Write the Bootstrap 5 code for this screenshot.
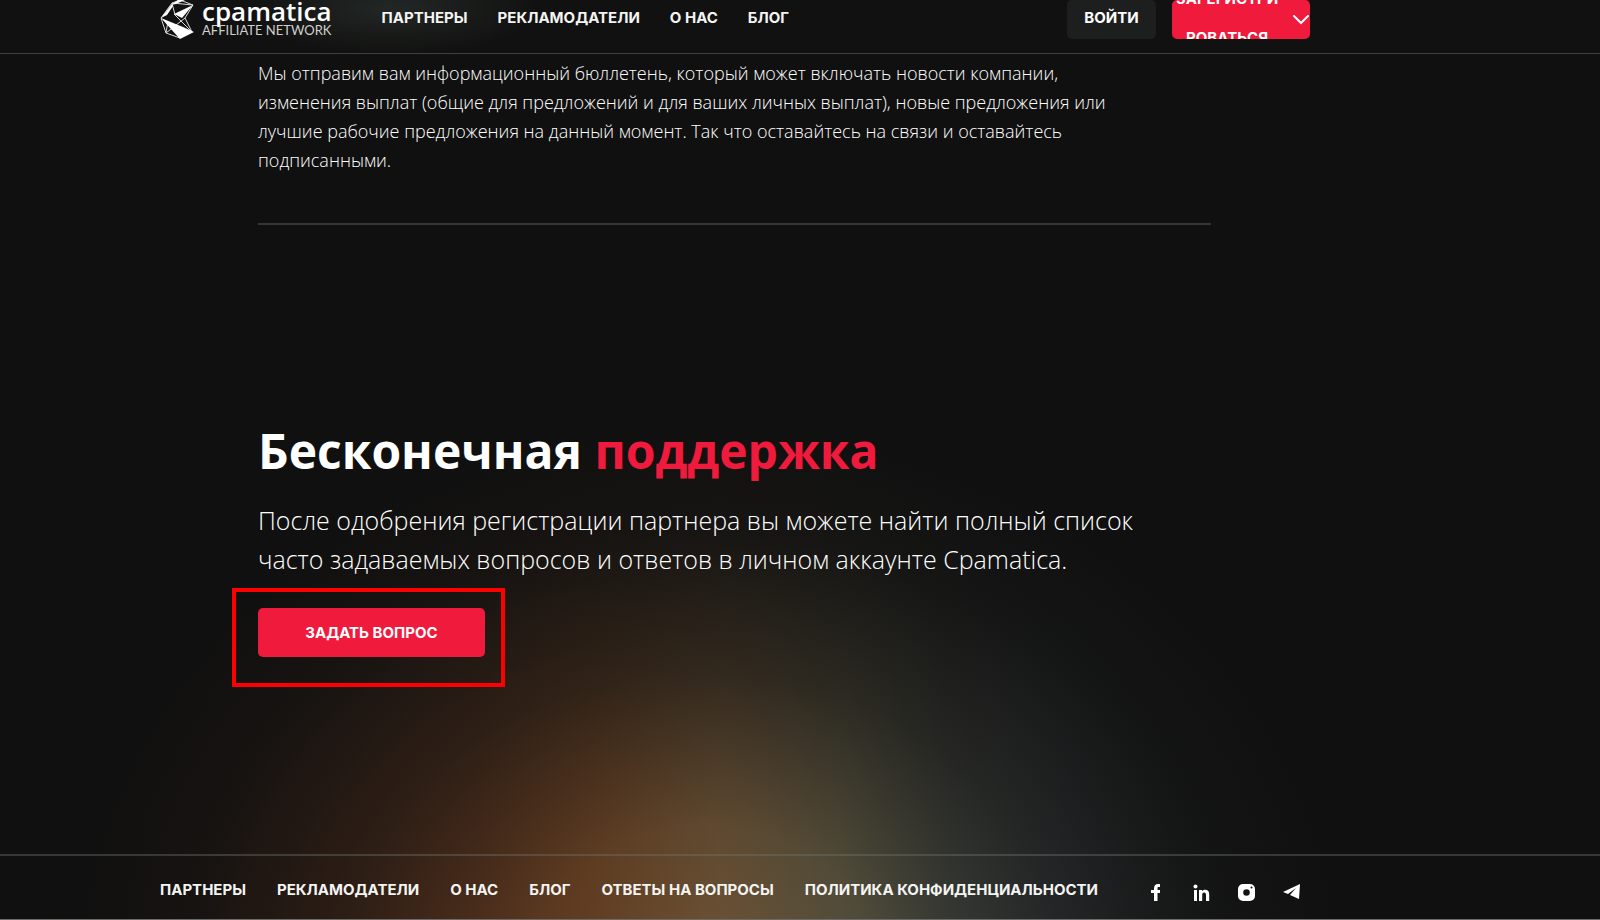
<!DOCTYPE html>
<html lang="ru">
<head>
<meta charset="utf-8">
<meta name="viewport" content="width=device-width, initial-scale=1">
<title>Cpamatica — поддержка</title>
<link href="https://cdn.jsdelivr.net/npm/bootstrap@5.3.0/dist/css/bootstrap.min.css" rel="stylesheet">
<style>
  :root { --accent: #f01a3c; --line: #323735; --ink: #101010; }
  body {
    font-family: "Open Sans", Lato, sans-serif;
    color: #ededeb;
    background:
      radial-gradient(ellipse 41% 60% at 44% 106%, rgba(16,16,16,0) 0%, rgba(16,16,16,.16) 27%, rgba(16,16,16,.64) 55%, rgba(16,16,16,.92) 80%, #101010 100%),
      linear-gradient(90deg, #5a2c18 0%, #643a20 30%, #6c4425 37%, #6e5436 45%, #5c5640 53%, #4b4e44 59%, #454c4e 66%, #3c4244 75%, #303030 100%);
    background-color: var(--ink);
  }
  a { color: #f4f4f2; text-decoration: none; }
  .page-inner { padding-left: 10%; padding-right: 18.125%; }
  .copy-inner { padding-left: 16.125%; padding-right: 24.3125%; }
  .site-header {
    padding-bottom: 14px;
    border-bottom: 1px solid #3c4240;
    background: radial-gradient(ellipse 150px 46px at 390px 8px, #222726, #181a18 60%, #111 100%) #111;
  }
  .caps-link { font: 700 15px/24px Inter, sans-serif; white-space: nowrap; }
  .link-row { gap: 30px; }
  .brand-name { font: 600 26px/22px "Open Sans", sans-serif; }
  .brand-tag { font: 400 13px/17px Lato, sans-serif; color: #cfcfcd; }
  .head-nav { padding-top: 6px; margin-left: 50px; }
  .head-btn { height: 39px; border-radius: 5px; border: 0; color: #fff; }
  .btn-login { width: 89px; background: #1d1f1e; }
  .btn-join { width: 138px; background: var(--accent); line-height: 39px; }
  .newsletter { font-size: 18px; line-height: 29px; font-weight: 300; color: #fff; padding-top: 5px; padding-bottom: 48px; border-bottom: 2px solid var(--line); }
  .support { padding-top: 192px; }
  .support h1 { font-size: 48px; line-height: 68px; font-weight: 700; color: #fff; }
  .support h1 span { color: var(--accent); }
  .support-text { font-size: 25px; line-height: 39px; font-weight: 300; color: #fff; margin-bottom: 9px; }
  .ask-frame { border: 4px solid #f00; margin-left: -26px; padding: 16px 16px 26px 22px; }
  .btn-ask { width: 227px; height: 49px; background: var(--accent); border: 0; border-radius: 5px; color: #fff; }
  .site-footer { border-top: 2px solid rgba(110,118,112,.4); border-bottom: 1px solid #6b6b69; height: 66px; padding-top: 5px; }
  .site-footer .link-row { gap: 31px; }
  .social { gap: 28px; margin-right: 10px; }
</style>
</head>
<body class="min-vh-100 d-flex flex-column">
<header class="site-header page-inner d-flex justify-content-between overflow-hidden">
  <div class="d-flex">
    <a href="#" class="d-flex gap-2 text-white" aria-label="cpamatica">
      <svg width="34" height="39" viewBox="0 0 34 39" fill="none" stroke="#d8d8d8" stroke-width="1">
        <path d="M1 18 12 3 20 0l13 5-8 13 7 14M1 18l5 15 14 5M12 3l3 12M14 14l18 18M6 33l19-15M8 21l-2 12M12 3l21 2"/>
        <path fill="#fff" stroke="none" d="M11 5 18 0h7l-9 4zM1 18 12 4l1 2-6 9zM14 14 33 5 22 18zM1 18l22 9 11 5-14 7z"/>
      </svg>
      <span class="d-flex flex-column">
        <span class="brand-name">cpamatica</span>
        <span class="brand-tag">AFFILIATE NETWORK</span>
      </span>
    </a>
    <nav class="d-flex link-row head-nav">
      <a class="caps-link" href="#">ПАРТНЕРЫ</a>
      <a class="caps-link" href="#">РЕКЛАМОДАТЕЛИ</a>
      <a class="caps-link" href="#">О НАС</a>
      <a class="caps-link" href="#">БЛОГ</a>
    </nav>
  </div>
  <div class="d-flex gap-3">
    <button type="button" class="head-btn btn-login caps-link p-0 pb-1">ВОЙТИ</button>
    <button type="button" class="head-btn btn-join caps-link p-0 overflow-hidden d-flex align-items-center justify-content-between">
      <span class="ms-1 pb-1">ЗАРЕГИСТРИ<br>РОВАТЬСЯ</span>
      <svg width="18" height="10" viewBox="0 0 18 10" fill="none" stroke="#fff" stroke-width="2" stroke-linecap="round"><path d="m2 1 7 7 7-7"/></svg>
    </button>
  </div>
</header>

<main class="copy-inner flex-grow-1">
  <section class="newsletter">Мы отправим вам информационный бюллетень, который может включать новости компании,<br>
    изменения выплат (общие для предложений и для ваших личных выплат), новые предложения или<br>
    лучшие рабочие предложения на данный момент. Так что оставайтесь на связи и оставайтесь<br>
    подписанными.</section>
  <section class="support">
    <h1 class="mb-3">Бесконечная <span>поддержка</span></h1>
    <p class="support-text">После одобрения регистрации партнера вы можете найти полный список<br>
      часто задаваемых вопросов и ответов в личном аккаунте Cpamatica.</p>
    <div class="ask-frame d-inline-block">
      <button type="button" class="btn-ask caps-link d-block">ЗАДАТЬ ВОПРОС</button>
    </div>
  </section>
</main>

<footer class="site-footer page-inner d-flex align-items-center justify-content-between">
  <nav class="d-flex link-row">
    <a class="caps-link" href="#">ПАРТНЕРЫ</a>
    <a class="caps-link" href="#">РЕКЛАМОДАТЕЛИ</a>
    <a class="caps-link" href="#">О НАС</a>
    <a class="caps-link" href="#">БЛОГ</a>
    <a class="caps-link" href="#">ОТВЕТЫ НА ВОПРОСЫ</a>
    <a class="caps-link" href="#">ПОЛИТИКА КОНФИДЕНЦИАЛЬНОСТИ</a>
  </nav>
  <div class="d-flex align-items-center social pt-1">
    <a href="#" class="d-flex" aria-label="Facebook"><svg width="17" height="17" viewBox="0 0 17 17" fill="#fff"><path d="M6 17V9H3V6h3V4.500C6 1.500 7.500 0 10 0h2v3h-1.300C9.800 3 9.500 3.400 9.500 4.200V6H12v3H9.500v8z"/></svg></a>
    <a href="#" class="d-flex" aria-label="LinkedIn"><svg width="17" height="17" viewBox="0 0 17 17" fill="#fff"><circle cx="2.500" cy="2.500" r="2"/><path d="M1 6h3v11H1zM6 6h3v1.300C9.700 6.300 10.700 5.800 12 5.800c3 0 4.200 1.700 4.200 4.500V17h-3.200v-6c0-1.600-.5-2.500-1.900-2.500S9.200 9.500 9.200 11v6H6z"/></svg></a>
    <a href="#" class="d-flex" aria-label="Instagram"><svg width="17" height="17" viewBox="0 0 17 17" fill="#fff"><path fill-rule="evenodd" d="M5 0h7a5 5 0 0 1 5 5v7a5 5 0 0 1-5 5H5a5 5 0 0 1-5-5V5a5 5 0 0 1 5-5zm3.500 5.200a3.300 3.300 0 1 0 0 6.600 3.300 3.300 0 0 0 0-6.600zM13.500 2.500a1 1 0 1 0 0 2 1 1 0 0 0 0-2z"/></svg></a>
    <a href="#" class="d-flex" aria-label="Telegram"><svg width="17" height="17" viewBox="0 0 17 17" fill="#fff"><path d="M17 0 0 8l5 2 8-6-6 7 9 4z"/></svg></a>
  </div>
</footer>
<script src="https://cdn.jsdelivr.net/npm/bootstrap@5.3.0/dist/js/bootstrap.bundle.min.js"></script>
</body>
</html>
